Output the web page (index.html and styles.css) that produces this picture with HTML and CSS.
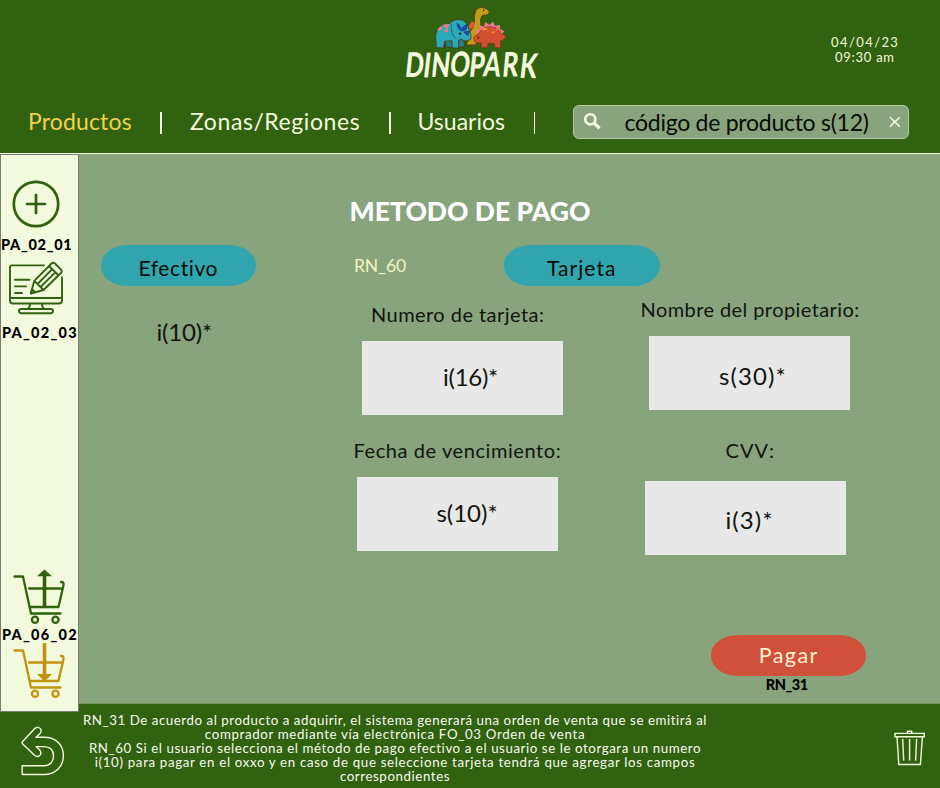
FILE: index.html
```html
<!DOCTYPE html>
<html lang="es">
<head>
<meta charset="utf-8">
<title>Dinopark</title>
<link rel="stylesheet" href="styles.css">
</head>
<body>
<header class="header">
  <div class="brand-row">
    <svg class="logo" viewBox="0 0 480 270">
      <g stroke="#4a3a16" stroke-width="2.5" stroke-linejoin="round">
        <path fill="#c39a19" d="M230 135 L236 98 Q255 82 253 60 Q252 24 272 22 Q297 24 298 38 Q296 46 278 46 Q270 52 272 70 Q274 92 262 104 L258 135 Z"/>
        <path fill="#e4572c" stroke="none" d="M246 64 l10 6 l-6 10 l-12 12 l-2 -14z"/>
        <path fill="#257d88" d="M165 118 L188 118 L190 142 L168 142 Z M204 118 L222 120 L224 140 L206 142 Z"/>
        <path fill="#2ba9b6" d="M139 143 L137 108 Q140 70 180 70 Q192 56 212 59 Q228 62 234 80 Q246 104 242 118 Q226 128 214 118 L206 121 L206 144 L187 144 L186 122 L164 124 L160 144 Z"/>
        <path fill="none" stroke="#17606b" d="M184 72 Q180 100 198 116"/>
        <path fill="#1854c8" stroke="#123b82" d="M201 69 Q210 76 213 86 L230 73 L229 88 L218 93 Q203 90 201 69 Z M222 96 L238 94 L233 107 Z"/>
      </g>
      <g fill="#f0798c">
        <path d="M142 88 l12 -10 l4 6 l-8 9z M158 74 l20 -2 l-5 13 l-8 -1z M160 91 l14 -5 l1 8 l-8 4z"/>
        <path d="M262 103 L256 89 L270 89 L268 75 L282 80 L286 66 L298 75 L309 65 L315 78 L330 74 L330 88 L343 93 L334 106 Z"/>
      </g>
      <path fill="#d2502f" stroke="#82351f" stroke-width="2" d="M252 122 Q248 108 263 104 Q280 76 304 80 Q329 83 334 103 Q347 102 346 113 Q340 121 331 122 L332 143 L316 143 L312 130 L294 130 L292 143 L274 143 L274 128 Q258 132 252 122 Z"/>
      <path fill="#f0952c" d="M279 84 h14 l-4 7 h-13z M302 96 l12 -2 l-2 7z M318 84 l8 5 l-7 2z"/>
      <g fill="#2a1c14"><circle cx="210" cy="101" r="3.5"/><circle cx="281" cy="31" r="2.5"/><circle cx="265" cy="113" r="2.5"/></g>
      <text class="logo-name" transform="translate(43 230) skewX(-6) scale(.72 1)" x="0 75 108 186 266 326 405 477" y="0 2 0 -2 0 -1 0 3" rotate="0 1 0 1 0 1 -1 1">DINOPARK</text>
    </svg>
    <div class="clock"><span class="date">04/04/23</span><span class="time">09:30 am</span></div>
  </div>
  <div class="nav-row">
    <nav class="nav">
      <a class="nav-products">Productos</a><i class="bar"></i>
      <a class="nav-zones">Zonas/Regiones</a><i class="bar"></i>
      <a class="nav-users">Usuarios</a><i class="bar"></i>
    </nav>
    <div class="search">
      <svg class="lens" viewBox="0 0 20 20"><circle cx="7.3" cy="7.3" r="5.1" stroke-width="2.6"/><path d="M11.2 11.2 L16.5 16.3" stroke-width="3.4"/></svg>
      <span class="query">código de producto s(12)</span>
      <svg class="clear" viewBox="0 0 12 12"><path d="M1 1.2 L10.8 10.6 M10.8 1.2 L1 10.6" stroke-width="1.5"/></svg>
    </div>
  </div>
</header>
<div class="body">
  <div class="left">
    <aside class="sidebar">
      <svg class="icon-add" viewBox="0 0 48 48"><circle cx="24" cy="24" r="22.2"/><path d="M24 15 V33 M15 24 H33"/></svg>
      <span class="code code-a">PA_02_01</span>
      <svg class="icon-edit" viewBox="0 0 56 54">
        <path d="M36 4.4 H4 Q2 4.4 2 6.4 V39.5 Q2 42.5 5 42.5 H51 Q54 42.5 54 39.5 V16.5 M2 37 H54"/>
        <path d="M22 43 Q22 47 19.5 48 M34 43 Q34 47 36.5 48"/>
        <rect x="11" y="48" width="34" height="4.2" rx="2.1"/>
        <path d="M7 18.7 H21.5 M7 25.4 H18 M7 32 H14"/>
        <path d="M22.8 32.5 L26.3 19.8 L43.5 2.5 Q45.2 .9 47 2.5 L53 8.7 Q54.5 10.4 53 12 L35.5 29 Z M26.3 19.8 L35.5 29 M41 5 L50.5 14.5 M29.5 23 L44 8.4 M32.5 26 L47.3 11.3"/>
        <path d="M23 32.3 l1.2 -4 l2.7 2.7z"/>
      </svg>
      <span class="code code-b">PA_02_03</span>
      <svg class="cart cart-out" viewBox="0 0 54 56">
        <path d="M1.5 7.5 H10 L18 44.5 H47.5 M17 38 H45.5 L50.3 17 Q51.5 12.8 48 13 M16 19.5 H49"/>
        <circle cx="22" cy="50.8" r="3.1"/><circle cx="42.5" cy="50.8" r="3.1"/>
        <path class="shaft" d="M31.5 38 V5"/><path class="head" d="M31.5 .5 L39 7.2 H24 Z"/>
      </svg>
      <span class="code code-c">PA_06_02</span>
      <svg class="cart cart-in" viewBox="0 0 54 56">
        <path d="M1.5 7.5 H10 L18 44.5 H47.5 M17 38 H45.5 L50.3 17 Q51.5 12.8 48 13 M16 19.5 H49"/>
        <circle cx="22" cy="50.8" r="3.1"/><circle cx="42.5" cy="50.8" r="3.1"/>
        <path class="shaft" d="M31.5 0 V34"/><path class="head" d="M31.5 38.8 L39 31 H24 Z"/>
      </svg>
    </aside>
    <div class="back">
      <svg class="icon-back" viewBox="0 0 44 50"><path d="M1.2 16 L13.8 2.5 Q17.5 -.2 19.8 3.2 Q20.8 5.8 18.5 8 L15 11.2 H23 C36 11.2 42.4 20 42.4 29.8 C42.4 40 35 48.5 23 48.5 H1.2 V39.7 H23 C29 39.7 32.5 35.5 32.5 30 C32.5 24 29 20.6 23 20.6 H15 L18.5 23.8 Q21 26.5 19 29.2 Q16.5 31.7 13.5 29.3 L1.2 17.5 Z"/></svg>
    </div>
  </div>
  <div class="right">
    <main class="main">
      <h1 class="title">METODO DE PAGO</h1>
      <div class="methods">
        <button class="pill cash">Efectivo</button>
        <span class="rule">RN_60</span>
        <button class="pill card">Tarjeta</button>
      </div>
      <div class="details">
        <div class="amount">i(10)*</div>
        <div class="fields fields-a">
          <label class="number">Numero de tarjeta:</label>
          <div class="input in-number">i(16)*</div>
          <label class="expiry">Fecha de vencimiento:</label>
          <div class="input in-expiry">s(10)*</div>
        </div>
        <div class="fields fields-b">
          <label class="owner">Nombre del propietario:</label>
          <div class="input in-owner">s(30)*</div>
          <label class="cvv">CVV:</label>
          <div class="input in-cvv">i(3)*</div>
        </div>
      </div>
      <div class="submit">
        <button class="pill pay">Pagar</button>
        <span class="pay-rule">RN_31</span>
      </div>
    </main>
    <footer class="footer">
      <p class="notes">
        <span class="n1">RN_31 De acuerdo al producto a adquirir, el sistema generará una orden de venta que se emitirá al</span>
        <span class="n2">comprador mediante vía electrónica FO_03 Orden de venta</span>
        <span class="n3">RN_60 Si el usuario selecciona el método de pago efectivo a el usuario se le otorgara un numero</span>
        <span class="n4">i(10) para pagar en el oxxo y en caso de que seleccione tarjeta tendrá que agregar los campos</span>
        <span class="n5">correspondientes</span>
      </p>
      <svg class="icon-trash" viewBox="0 0 32 36"><path d="M1 3.4 H30.2 V6.8 H1 Z M13.5 3.2 V1.2 H17.7 V3.2 M3 7 L4.8 34.5 H26.4 L28.4 7 M8.7 9 L9.7 30.6 M15.6 9 V30.6 M22.6 9 L21.6 30.6"/></svg>
    </footer>
  </div>
</div>
</body>
</html>
```
FILE: styles.css
```css
* { box-sizing: border-box; }
body { margin: 0; width: 940px; height: 788px; overflow: hidden; background: #31620f; font-family: Lato, sans-serif; color: #11150e; }
svg { display: block; fill: none; flex: none; }
button { border: 0; font-family: inherit; }
span, a, label, h1 { white-space: pre; }

.header { height: 154px; border-bottom: 1px solid #f3f9dc; color: #f3f9dc; }
.brand-row { display: flex; height: 90px; padding-left: 390px; }
.logo { width: 160px; height: 90px; }
.logo-name { fill: #f3f9dc; font: 900 102px Lato, sans-serif; }
.clock { display: flex; flex-direction: column; align-items: center; width: 90px; margin-left: 269.5px; padding-top: 35px; font-size: 13px; line-height: 15px; }
.date { letter-spacing: 1.4px; margin-right: -1.4px; }
.time { letter-spacing: .75px; margin-right: -.75px; }

.nav-row { display: flex; padding-top: 15px; }
.nav { display: flex; align-items: center; width: 573px; height: 31px; padding-left: 28px; font-size: 23px; line-height: 30px; }
.nav-products { width: 132px; color: #f3d14f; letter-spacing: .15px; }
.nav-zones { width: 199px; padding-left: 28.5px; box-sizing: content-box; letter-spacing: .57px; }
.nav-users { width: 116px; padding-left: 27px; box-sizing: content-box; }
.bar { width: 1.5px; height: 22px; margin-top: 4px; background: #f3f9dc; flex: none; }
.search { display: flex; align-items: center; width: 336px; height: 33.5px; padding-left: 9px; border: 1px solid #b4cba3; border-radius: 6px; background: #87a47d; }
.lens { width: 20px; height: 20px; stroke: #f3f9dc; }
.query { width: 264px; margin-left: 21.5px; padding-top: 1px; font-size: 23px; line-height: 30px; letter-spacing: -.26px; color: #080b06; }
.clear { width: 12px; height: 12px; stroke: #f3f9dc; }

.body { display: flex; height: 634px; }
.left { width: 78.5px; flex: none; }
.sidebar { display: flex; flex-direction: column; height: 558px; border: 1px solid #777b70; background: #f3f9dc; color: #000; }
.icon-add { width: 48px; height: 48px; margin: 25px 0 0 11px; stroke: #31620f; stroke-width: 2.7; stroke-linecap: round; }
.code { font-size: 14.5px; font-weight: 900; line-height: 16px; height: 16px; }
.code-a { margin-top: 9px; letter-spacing: .7px; }
.icon-edit { width: 56px; height: 54px; margin: 8px 0 0 7px; stroke: #31620f; stroke-width: 1.9; stroke-linecap: round; stroke-linejoin: round; }
.code-b { margin: 10px 0 0 1px; letter-spacing: 1.25px; }
.cart { width: 54px; height: 56px; margin-left: 11.5px; stroke-width: 2.3; stroke-linecap: round; stroke-linejoin: round; }
.cart-out { margin-top: 228px; stroke: #31620f; }
.cart-in { stroke: #c1930f; }
.shaft { stroke-width: 3.6; stroke-linecap: butt; }
.cart-out .head { fill: #31620f; stroke: none; }
.cart-in .head { fill: #c1930f; stroke: none; }
.code-c { margin: 2px 0 0 1px; letter-spacing: 1.25px; }
.back { padding: 14px 0 0 20.5px; }
.icon-back { width: 44px; height: 50px; stroke: #f3f9dc; stroke-width: 1.4; stroke-linejoin: round; }

.right { width: 861.5px; }
.main { height: 550px; padding-top: 41px; border-bottom: 1px solid #76975f; background: #87a47d; }
.title { margin: 0 0 0 271px; height: 50px; color: #fff; font-size: 26.5px; font-weight: 900; line-height: 32px; }
.methods { display: flex; height: 40px; padding-left: 22px; }
.pill { width: 155.5px; height: 40.5px; padding: 6px 0 0; border-radius: 27px / 20px; background: #30a5ae; color: #080b06; font-size: 21px; line-height: 30px; text-align: center; flex: none; }
.cash { letter-spacing: .61px; }
.card { letter-spacing: 1.07px; }
.rule { width: 248px; padding-left: 98px; color: #f3f3bd; font-size: 17.5px; line-height: 41px; letter-spacing: -.1px; }
.details { display: flex; }
.amount { width: 275px; padding: 32px 0 0 78px; font-size: 24px; line-height: 30px; letter-spacing: -.2px; }
.fields { display: flex; flex-direction: column; font-size: 20px; line-height: 24px; }
.fields-a { width: 287px; padding-top: 17px; }
.fields-b { width: 230px; padding-top: 12px; }
.number { margin-left: 17.5px; letter-spacing: .45px; }
.owner { letter-spacing: .42px; }
.expiry { margin-top: 23px; letter-spacing: .58px; }
.cvv { margin: 28px 0 0 85px; letter-spacing: 1.1px; }
.input { width: 201px; height: 74px; background: #e8e8e8; font-size: 24px; line-height: 72px; text-align: center; }
.in-number { margin: 15px 0 0 8.5px; padding-left: 16px; letter-spacing: -.3px; }
.in-expiry { margin: 15px 0 0 3.5px; padding-left: 19px; }
.in-owner { margin: 15px 0 0 8.5px; padding: 4px 0 0 7px; letter-spacing: 1.1px; }
.in-cvv { margin: 19px 0 0 4.5px; padding: 3px 0 0 8px; letter-spacing: 1.1px; }
.submit { display: flex; flex-direction: column; align-items: center; width: 155.5px; margin: 80px 0 0 632px; }
.pay { padding: 0 0 0 1px; background: #d0503c; color: #f9f2cf; font-size: 21.5px; letter-spacing: 1.4px; }
.pay-rule { margin: 1px 3px 0 0; color: #000; font-size: 14.5px; font-weight: 900; line-height: 16px; letter-spacing: -.5px; }

.footer { display: flex; height: 84px; color: #f8faef; }
.notes { display: flex; flex-direction: column; align-items: center; width: 633px; margin: 9px 0 0; font-size: 13.3px; line-height: 14px; }
.n1 { letter-spacing: .55px; }
.n2 { letter-spacing: .65px; }
.n3 { letter-spacing: .57px; }
.n4 { letter-spacing: .66px; }
.n5 { letter-spacing: .58px; }
.icon-trash { width: 32px; height: 36px; margin: 26px 0 0 182px; stroke: #f3f9dc; stroke-width: 1.4; }
```
